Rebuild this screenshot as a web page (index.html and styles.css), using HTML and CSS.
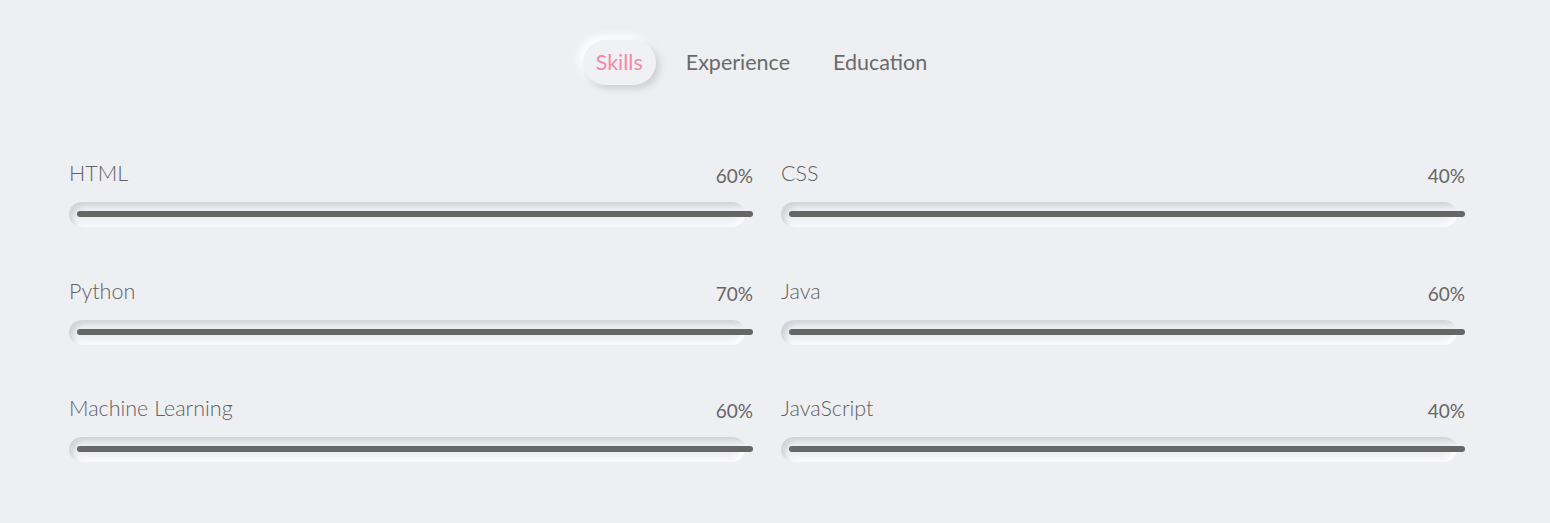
FILE: index.html
```html
<!DOCTYPE html>
<html lang="en">
<head>
<meta charset="utf-8">
<title>Skills</title>
<link rel="stylesheet" href="styles.css">
</head>
<body>
<nav class="tabs">
  <span class="tab active">Skills</span>
  <span class="tab">Experience</span>
  <span class="tab">Education</span>
</nav>
<section class="skills">
  <div class="skill">
    <div class="skill-head"><span class="skill-name">HTML</span><span class="skill-pct">60%</span></div>
    <div class="track"><div class="fill"></div></div>
  </div>
  <div class="skill">
    <div class="skill-head"><span class="skill-name">CSS</span><span class="skill-pct">40%</span></div>
    <div class="track"><div class="fill"></div></div>
  </div>
  <div class="skill">
    <div class="skill-head"><span class="skill-name">Python</span><span class="skill-pct">70%</span></div>
    <div class="track"><div class="fill"></div></div>
  </div>
  <div class="skill">
    <div class="skill-head"><span class="skill-name">Java</span><span class="skill-pct">60%</span></div>
    <div class="track"><div class="fill"></div></div>
  </div>
  <div class="skill">
    <div class="skill-head"><span class="skill-name">Machine Learning</span><span class="skill-pct">60%</span></div>
    <div class="track"><div class="fill"></div></div>
  </div>
  <div class="skill">
    <div class="skill-head"><span class="skill-name">JavaScript</span><span class="skill-pct">40%</span></div>
    <div class="track"><div class="fill"></div></div>
  </div>
</section>
</body>
</html>
```

FILE: styles.css
```css
* { box-sizing: border-box; }

body {
  margin: 0;
  background: #eeeff3;
  font-family: Lato, "Noto Sans", sans-serif;
  color: #666666;
}

.tabs {
  display: flex;
  justify-content: center;
  gap: 17px;
  padding: 40px 27px 0 0;
}

.tab {
  font-size: 21.5px;
  line-height: 25px;
  padding: 10px 13px;
  border-radius: 23px;
  color: #6a6a6a;
}

.tab.active {
  color: #f08aa8;
  background: #f0f1f5;
  box-shadow: 4px 4px 7px #cfd0d5, -4px -4px 8px #ffffff;
}

.skills {
  display: grid;
  grid-template-columns: 684px 684px;
  column-gap: 28px;
  row-gap: 50.5px;
  padding: 75px 0 0 69px;
}

.skill-head {
  display: flex;
  justify-content: space-between;
  align-items: flex-start;
  height: 42px;
}

.skill-name {
  font-size: 21.5px;
  line-height: 26px;
  font-weight: 300;
  color: #626262;
}

.skill-pct {
  font-size: 19px;
  line-height: 26px;
  padding-top: 3px;
  font-weight: 400;
}

.track {
  position: relative;
  width: calc(100% - 8px);
  height: 25px;
  border-radius: 13px;
  background: #eeeff3;
  box-shadow: inset 4px 4px 5px #d2d3d7, inset -4px -4px 5px #fbfbfd;
}

.fill {
  position: absolute;
  left: 8px;
  right: -8px;
  top: 9px;
  height: 6px;
  border-radius: 3px;
  background: #666666;
}
```
